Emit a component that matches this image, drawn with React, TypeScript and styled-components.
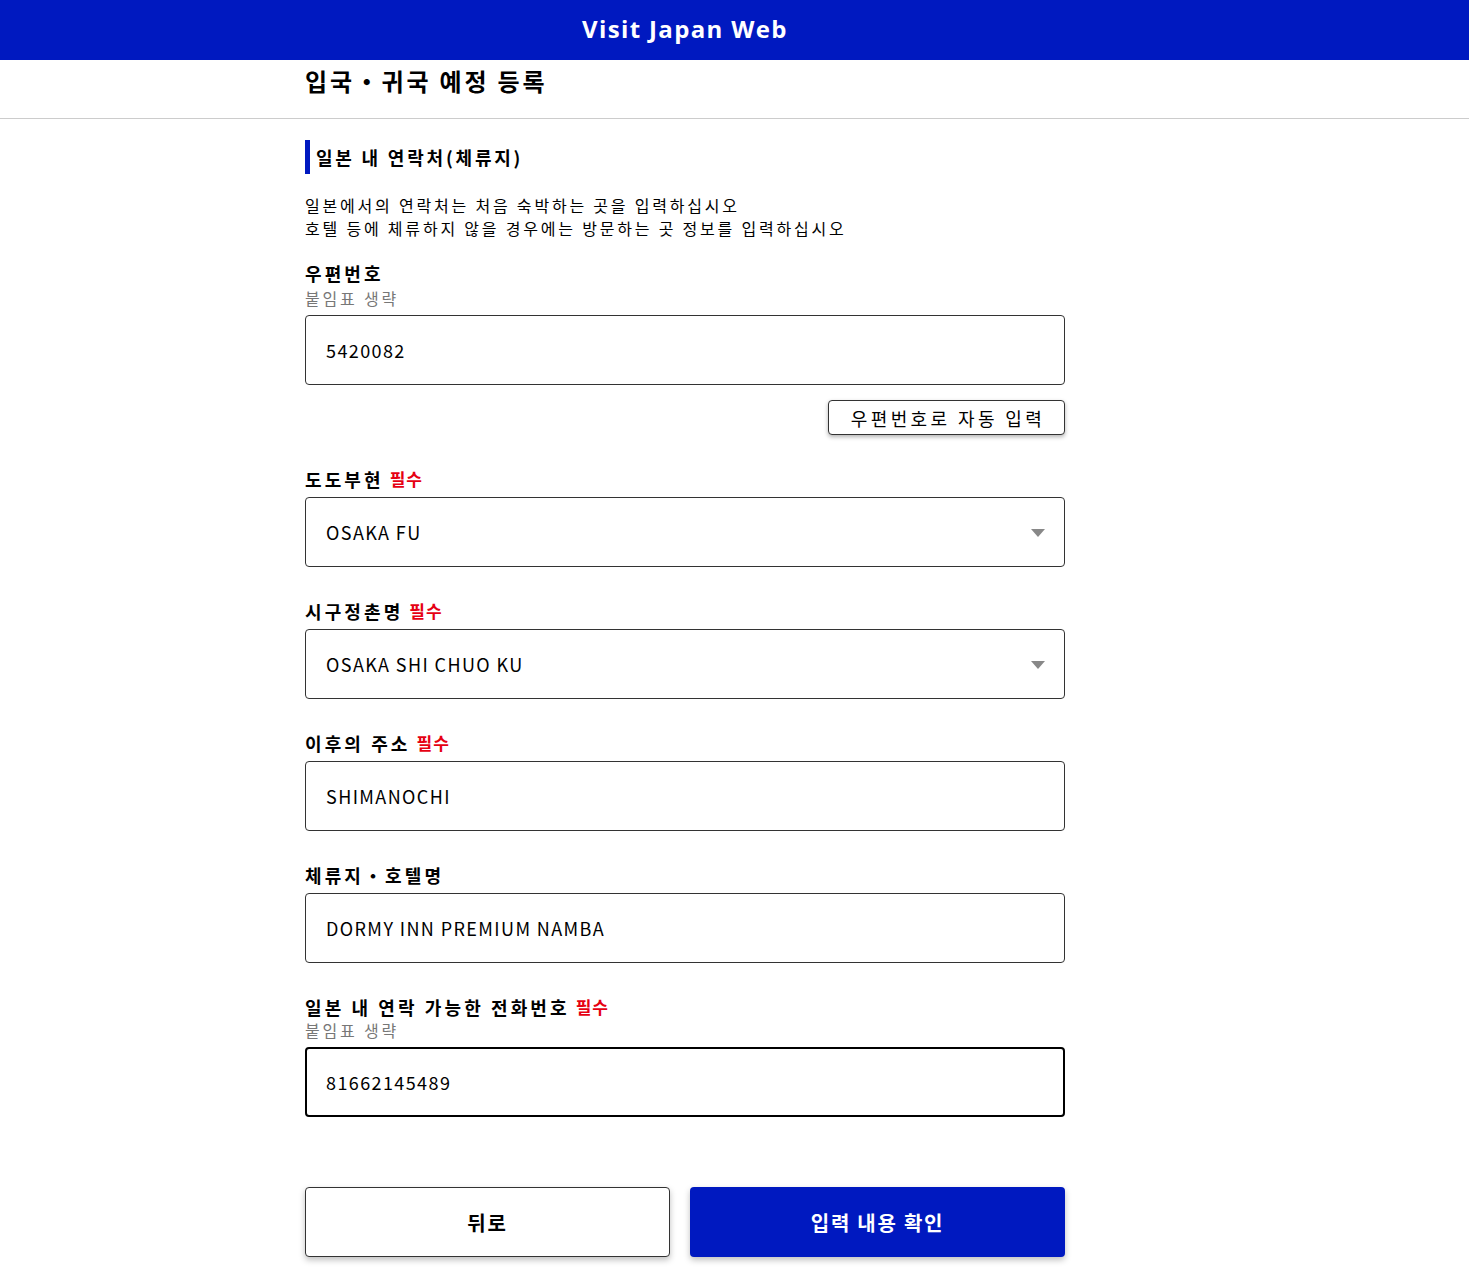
import React from 'react'
import styled, { createGlobalStyle } from 'styled-components'

const GlobalStyle = createGlobalStyle`
  body {
    margin: 0;
    background: #fff;
    color: #000;
    font-family: 'Noto Sans CJK KR', 'Noto Sans', sans-serif;
  }
`

const BLUE = '#0019c0'

const Header = styled.header`
  height: 60px;
  background: ${BLUE};
`

const HeaderInner = styled.div`
  box-sizing: border-box;
  width: 1370px;
  height: 100%;
  padding-bottom: 4px;
  display: flex;
  align-items: center;
  justify-content: center;
`

const Brand = styled.h1`
  margin: 0;
  color: #fff;
  font-family: 'Open Sans', sans-serif;
  font-weight: 700;
  font-size: 24px;
  letter-spacing: 1.35px;
`

const TitleBar = styled.div`
  height: 58px;
  border-bottom: 1px solid #ccc;
`

const Column = styled.div`
  width: 760px;
  margin-left: 305px;
`

const PageTitle = styled.h2`
  margin: 0;
  padding-top: 3px;
  font-size: 24px;
  line-height: 36px;
  font-weight: 700;
  letter-spacing: 2.8px;
`

const Main = styled(Column)`
  padding: 21px 0 60px;
`

const SectionTitle = styled.h3`
  margin: 0;
  height: 34px;
  display: flex;
  align-items: center;
  border-left: 5px solid ${BLUE};
  padding-left: 6px;
  font-size: 18px;
  font-weight: 700;
  letter-spacing: 2.8px;
`

const Lead = styled.p`
  margin: 20px 0 0;
  font-size: 16px;
  line-height: 23px;
  letter-spacing: 2.8px;
`

const Field = styled.div<{ $gap?: number }>`
  margin-top: ${(p) => p.$gap ?? 32}px;
`

const Label = styled.div`
  font-size: 18px;
  line-height: 24px;
  font-weight: 700;
  letter-spacing: 3.1px;
  display: flex;
  gap: 6px;
`

const Required = styled.span`
  color: #e60012;
  font-size: 17px;
  letter-spacing: 1px;
`

const Hint = styled.div<{ $top?: number }>`
  margin-top: ${(p) => p.$top ?? 0}px;
  font-size: 16px;
  line-height: 22px;
  color: #777;
  letter-spacing: 2.8px;
`

const Control = styled.div`
  position: relative;
  margin-top: 6px;
`

const TextBox = styled.input<{ $focused?: boolean }>`
  box-sizing: border-box;
  display: block;
  width: 100%;
  height: 70px;
  padding: 0 ${(p) => (p.$focused ? 19 : 20)}px;
  border: ${(p) => (p.$focused ? '2px solid #000' : '1px solid #333')};
  border-radius: 4px;
  background: #fff;
  color: #000;
  font-family: inherit;
  font-size: 18px;
  letter-spacing: 1.4px;
  outline: none;
`

const SelectBox = styled.select`
  box-sizing: border-box;
  display: block;
  width: 100%;
  height: 70px;
  padding: 0 50px 0 20px;
  border: 1px solid #333;
  border-radius: 4px;
  background: #fff;
  color: #000;
  font-family: inherit;
  font-size: 18px;
  letter-spacing: 1.4px;
  appearance: none;
  outline: none;
`

const Caret = styled.span`
  position: absolute;
  right: 20px;
  top: 32px;
  width: 0;
  height: 0;
  border-left: 7px solid transparent;
  border-right: 7px solid transparent;
  border-top: 8px solid #888;
  pointer-events: none;
`

const AutoRow = styled.div`
  display: flex;
  justify-content: flex-end;
  margin-top: 15px;
`

const AutoButton = styled.button`
  width: 237px;
  height: 35px;
  border: 1px solid #333;
  border-radius: 4px;
  background: #fff;
  box-shadow: 0 2px 4px rgba(0, 0, 0, 0.3);
  font-family: inherit;
  font-size: 18px;
  letter-spacing: 3.4px;
  color: #000;
  padding: 0 0 0 3px;
`

const Actions = styled.div`
  display: grid;
  grid-template-columns: 365px 375px;
  gap: 20px;
  margin-top: 70px;
`

const ActionButton = styled.button<{ $primary?: boolean }>`
  height: 70px;
  border: ${(p) => (p.$primary ? 'none' : '1px solid #333')};
  border-radius: 4px;
  background: ${(p) => (p.$primary ? BLUE : '#fff')};
  color: ${(p) => (p.$primary ? '#fff' : '#000')};
  box-shadow: 0 3px 6px rgba(0, 0, 0, 0.25);
  font-family: inherit;
  font-size: 20px;
  font-weight: 700;
  letter-spacing: 1.75px;
`

const fields = [
  { label: '도도부현', value: 'OSAKA FU', select: true },
  { label: '시구정촌명', value: 'OSAKA SHI CHUO KU', select: true },
  { label: '이후의 주소', value: 'SHIMANOCHI' },
  { label: '체류지・호텔명', value: 'DORMY INN PREMIUM NAMBA', optional: true },
]

export default function App() {
  return (
    <>
      <GlobalStyle />
      <Header>
        <HeaderInner>
          <Brand>Visit Japan Web</Brand>
        </HeaderInner>
      </Header>
      <TitleBar>
        <Column>
          <PageTitle>입국・귀국 예정 등록</PageTitle>
        </Column>
      </TitleBar>
      <Main>
        <SectionTitle>일본 내 연락처(체류지)</SectionTitle>
        <Lead>
          일본에서의 연락처는 처음 숙박하는 곳을 입력하십시오
          <br />
          호텔 등에 체류하지 않을 경우에는 방문하는 곳 정보를 입력하십시오
        </Lead>

        <Field $gap={21}>
          <Label>우편번호</Label>
          <Hint $top={2}>붙임표 생략</Hint>
          <Control>
            <TextBox readOnly value='5420082' />
          </Control>
          <AutoRow>
            <AutoButton>우편번호로 자동 입력</AutoButton>
          </AutoRow>
        </Field>

        {fields.map((f) => (
          <Field key={f.label}>
            <Label>
              {f.label}
              {!f.optional && <Required>필수</Required>}
            </Label>
            <Control>
              {f.select ? (
                <>
                  <SelectBox value={f.value} onChange={() => {}}>
                    <option value={f.value}>{f.value}</option>
                  </SelectBox>
                  <Caret />
                </>
              ) : (
                <TextBox readOnly value={f.value} />
              )}
            </Control>
          </Field>
        ))}

        <Field>
          <Label>
            일본 내 연락 가능한 전화번호<Required>필수</Required>
          </Label>
          <Hint>붙임표 생략</Hint>
          <Control>
            <TextBox $focused readOnly value='81662145489' />
          </Control>
        </Field>

        <Actions>
          <ActionButton>뒤로</ActionButton>
          <ActionButton $primary>입력 내용 확인</ActionButton>
        </Actions>
      </Main>
    </>
  )
}
